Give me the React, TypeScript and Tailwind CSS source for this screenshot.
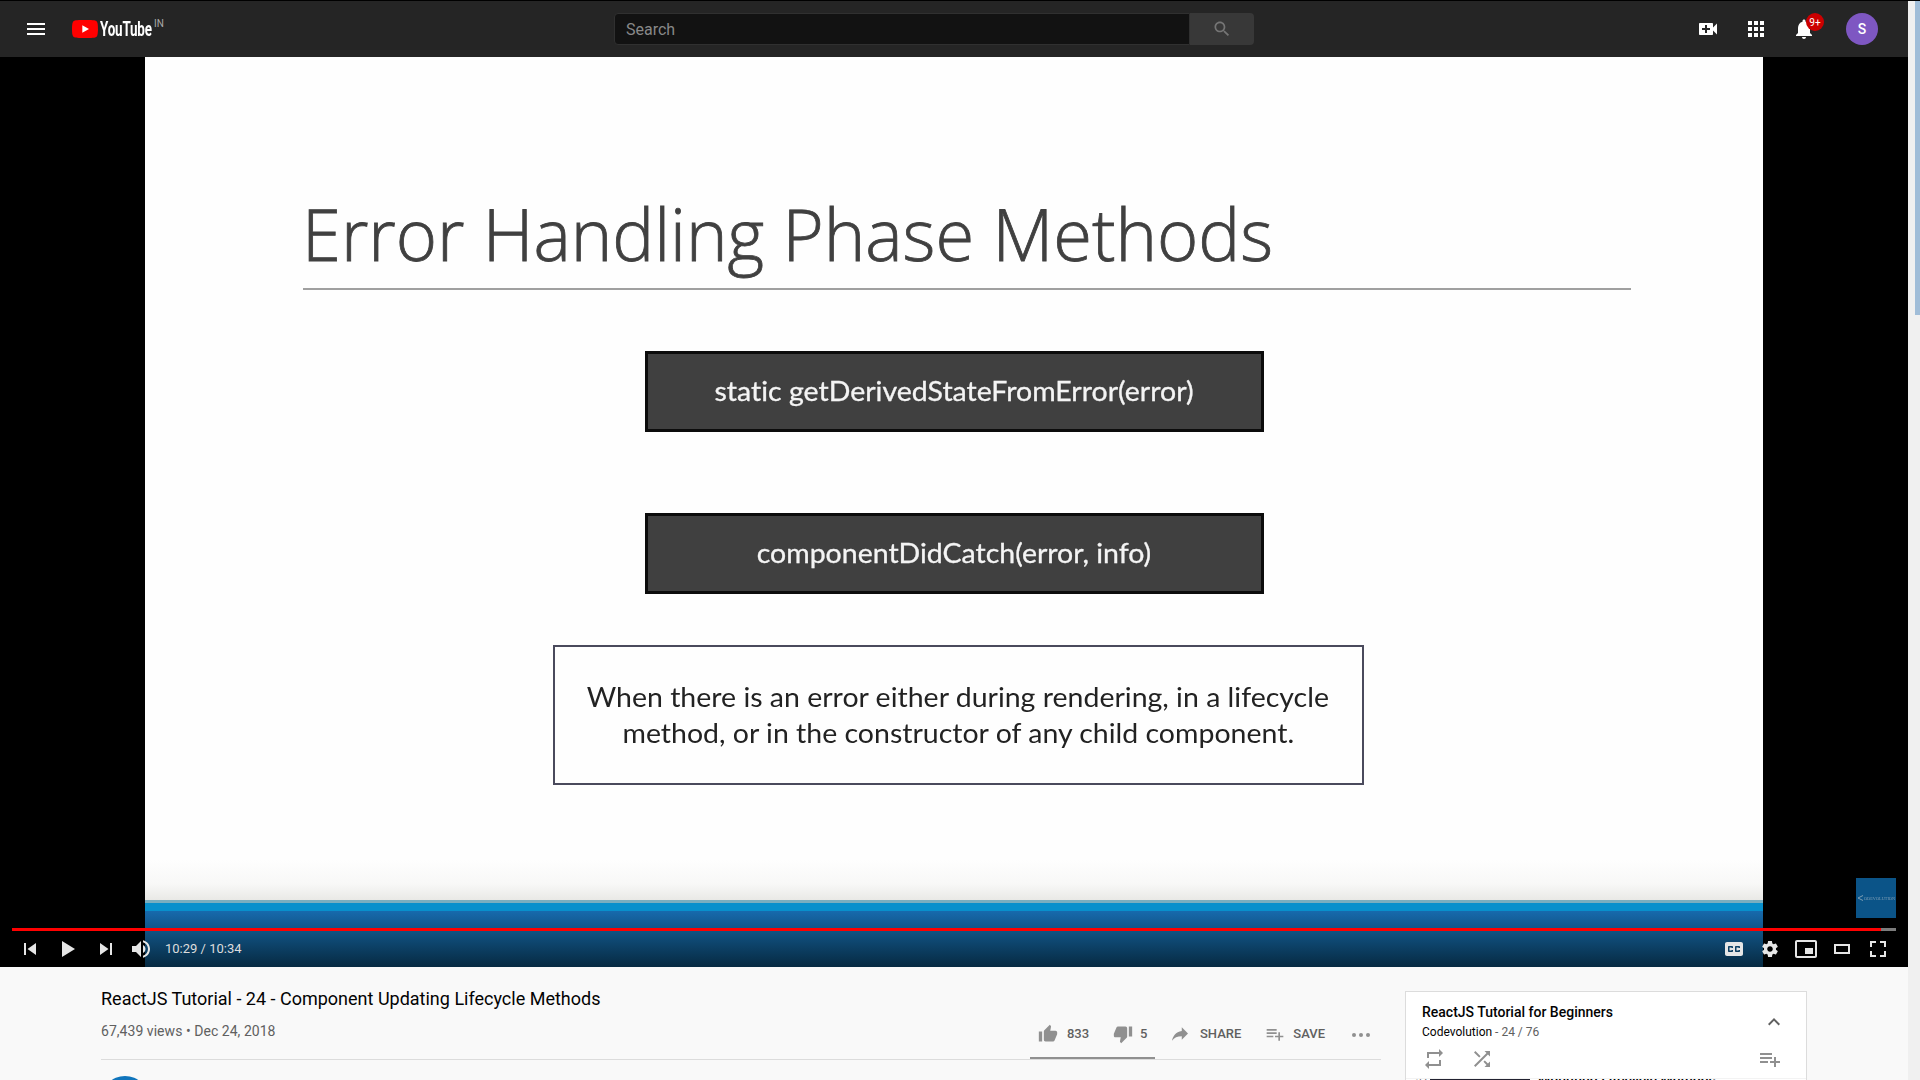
import type { ReactNode } from "react";

function Icon({ d, className, box = "0 0 24 24" }: { d: string; className: string; box?: string }) {
  return (
    <svg viewBox={box} className={className} fill="currentColor" fillRule="evenodd">
      <path d={d} />
    </svg>
  );
}

const playlistAdd = "M14 10H2v2h12v-2zm0-4H2v2h12V6zm4 8v-4h-2v4h-4v2h4v4h2v-4h4v-2h-4zM2 16h8v-2H2v2z";

const player = {
  prev: "M12,12h2v12h-2z M15.5,18l8.5,6V12z",
  play: "M12,26 25,18 12,10z",
  next: "M12,24 20.5,18 12,12V24z M22,12v12h2V12h-2z",
  volume:
    "M8,21 L12,21 L17,26 L17,10 L12,15 L8,15 L8,21 Z M19,14 L19,22 C20.48,21.32 21.5,19.77 21.5,18 C21.5,16.26 20.48,14.74 19,14 Z M19,11.29 C21.89,12.15 24,14.83 24,18 C24,21.17 21.89,23.85 19,24.71 L19,26.77 C23.01,25.86 26,22.28 26,18 C26,13.72 23.01,10.14 19,9.23 L19,11.29 Z",
  captions:
    "M11,11 C9.89,11 9,11.9 9,13 L9,23 C9,24.1 9.89,25 11,25 L25,25 C26.1,25 27,24.1 27,23 L27,13 C27,11.9 26.1,11 25,11 L11,11 Z M17,17 L15.5,17 L15.5,16.5 L13.5,16.5 L13.5,19.5 L15.5,19.5 L15.5,19 L17,19 L17,20 C17,20.55 16.55,21 16,21 L13,21 C12.45,21 12,20.55 12,20 L12,16 C12,15.45 12.45,15 13,15 L16,15 C16.55,15 17,15.45 17,16 L17,17 Z M24,17 L22.5,17 L22.5,16.5 L20.5,16.5 L20.5,19.5 L22.5,19.5 L22.5,19 L24,19 L24,20 C24,20.55 23.55,21 23,21 L20,21 C19.45,21 19,20.55 19,20 L19,16 C19,15.45 19.45,15 20,15 L23,15 C23.55,15 24,15.45 24,16 L24,17 Z",
  gear:
    "m 23.94,18.78 c .03,-0.25 .05,-0.51 .05,-0.78 0,-0.27 -0.02,-0.52 -0.05,-0.78 l 1.68,-1.32 c .15,-0.12 .19,-0.33 .09,-0.51 l -1.6,-2.76 c -0.09,-0.17 -0.31,-0.24 -0.48,-0.17 l -1.99,.8 c -0.41,-0.32 -0.86,-0.58 -1.35,-0.78 l -0.30,-2.12 c -0.02,-0.19 -0.19,-0.33 -0.39,-0.33 l -3.2,0 c -0.2,0 -0.36,.14 -0.39,.33 l -0.30,2.12 c -0.48,.2 -0.93,.47 -1.35,.78 l -1.99,-0.8 c -0.18,-0.07 -0.39,0 -0.48,.17 l -1.6,2.76 c -0.10,.17 -0.05,.39 .09,.51 l 1.68,1.32 c -0.03,.25 -0.05,.52 -0.05,.78 0,.26 .02,.52 .05,.78 l -1.68,1.32 c -0.15,.12 -0.19,.33 -0.09,.51 l 1.6,2.76 c .09,.17 .31,.24 .48,.17 l 1.99,-0.8 c .41,.32 .86,.58 1.35,.78 l .30,2.12 c .02,.19 .19,.33 .39,.33 l 3.2,0 c .2,0 .36,-0.14 .39,-0.33 l .30,-2.12 c .48,-0.2 .93,-0.47 1.35,-0.78 l 1.99,.8 c .18,.07 .39,0 .48,-0.17 l 1.6,-2.76 c .09,-0.17 .05,-0.39 -0.09,-0.51 l -1.68,-1.32 0,0 z m -5.94,2.01 c -1.54,0 -2.8,-1.25 -2.8,-2.8 0,-1.54 1.25,-2.8 2.8,-2.8 1.54,0 2.8,1.25 2.8,2.8 0,1.54 -1.25,2.8 -2.8,2.8 l 0,0 z",
  mini:
    "M25,17 L17,17 L17,23 L25,23 Z M29,25 L29,11 C29,9.88 28.1,9 27,9 L9,9 C7.9,9 7,9.88 7,11 L7,25 C7,26.1 7.9,27 9,27 L27,27 C28.1,27 29,26.1 29,25 Z M27,25 L9,25 L9,11 L27,11 Z",
  theater: "M10,13H26V23H10Z M12,15V21H24V15Z",
  full:
    "M10,16h2v-4h4v-2h-6z M20,10v2h4v4h2v-6z M24,24h-4v2h6v-6h-2z M12,20h-2v6h6v-2h-4z",
};

function Header() {
  return (
    <header className="flex h-[57px] items-center border-t border-black bg-[#252525] text-white">
      <Icon d="M3 18h18v-2H3v2zm0-5h18v-2H3v2zm0-7v2h18V6H3z" className="ml-6 size-6" />
      <div className="ml-6 flex h-6 w-[96px] items-center">
        <svg viewBox="0 0 26 18" className="h-[18px] w-[26px] shrink-0">
          <path
            fill="#ff0000"
            d="M25.4 2.8A3.2 3.2 0 0 0 23.1.5C21.1 0 13 0 13 0S4.900 0 2.900.5A3.200 3.200 0 0 0 .6 2.800C0 4.800 0 9 0 9s0 4.200.6 6.200a3.200 3.200 0 0 0 2.300 2.300C4.900 18 13 18 13 18s8.100 0 10.100-.5a3.200 3.200 0 0 0 2.300-2.300C26 13.200 26 9 26 9s0-4.200-.6-6.200z"
          />
          <path fill="#fff" d="M10.300 5.200v7.600L17 9z" />
        </svg>
        <div className="mt-[2px] ml-[2px] w-[53px] whitespace-nowrap">
          <span className="inline-block origin-left scale-x-[0.655] font-['Roboto'] text-[20.5px] leading-6 font-bold tracking-[-0.3px]">
            YouTube
          </span>
        </div>
        <span className="mb-[11px] ml-px font-['Roboto'] text-[10px] leading-3 text-[#aaa]">IN</span>
      </div>
      <div className="ml-[446px] flex h-8 w-[640px]">
        <div className="flex w-[576px] items-center rounded-l-sm border border-[#303030] bg-[#121212] pt-[2px] pl-[11px] text-base text-[#888]">
          Search
        </div>
        <div className="flex flex-1 items-center justify-center rounded-r-sm bg-[#383838] text-[#757575]">
          <Icon
            className="size-5"
            d="M15.5 14h-.79l-.28-.27C15.41 12.59 16 11.11 16 9.500 16 5.910 13.090 3 9.500 3S3 5.910 3 9.500 5.910 16 9.500 16c1.610 0 3.090-.59 4.230-1.570l.27.28v.79l5 4.990L20.490 19l-4.990-5zm-6 0C7.010 14 5 11.990 5 9.500S7.010 5 9.500 5 14 7.010 14 9.500 11.990 14 9.500 14z"
          />
        </div>
      </div>
      <div className="ml-auto mr-[30px] flex items-center gap-6">
        <Icon
          className="size-6"
          d="M17 10.500V7c0-.55-.45-1-1-1H4c-.55 0-1 .45-1 1v10c0 .55.45 1 1 1h12c.55 0 1-.45 1-1v-3.500l4 4v-11l-4 4zM14 13h-3v3H9v-3H6v-2h3V8h2v3h3v2z"
        />
        <Icon
          className="size-6"
          d="M4 8h4V4H4v4zm6 12h4v-4h-4v4zm-6 0h4v-4H4v4zm0-6h4v-4H4v4zm6 0h4v-4h-4v4zm6-10v4h4V4h-4zm-6 4h4V4h-4v4zm6 6h4v-4h-4v4zm0 6h4v-4h-4v4z"
        />
        <div className="relative">
          <Icon
            className="size-6"
            d="M12 22c1.100 0 2-.9 2-2h-4c0 1.100.9 2 2 2zm6-6v-5c0-3.070-1.640-5.640-4.500-6.320V4c0-.83-.67-1.500-1.500-1.500s-1.500.67-1.500 1.500v.68C7.630 5.360 6 7.920 6 11v5l-2 2v1h16v-1l-2-2z"
          />
          <span className="absolute top-[-4px] left-[14px] flex size-[18px] items-center justify-center rounded-full bg-[#cc0000] text-[10px]">
            9+
          </span>
        </div>
        <div className="ml-[6px] flex size-8 items-center justify-center rounded-full bg-[#7e57c2] text-sm font-medium">
          S
        </div>
      </div>
    </header>
  );
}

function CodeBox({ children, className }: { children: string; className: string }) {
  return (
    <div
      className={`flex h-[81px] w-[619px] items-center justify-center border-[3px] border-[#0c0c0c] bg-[#404040] font-['Lato'] text-[27px] text-[#f4f4f4] blur-[0.4px] [font-variant-ligatures:none] [-webkit-text-stroke:0.3px_#f4f4f4] ${className}`}
    >
      <span className="scale-x-[1.055]">{children}</span>
    </div>
  );
}

function Slide() {
  return (
    <div className="mx-[145px] flex h-full flex-col items-center bg-[#fefefe] pt-[128px]">
      <div className="ml-[26px] h-[105px] w-[1328px] border-b-2 border-[#a0a0a0] whitespace-nowrap blur-[0.4px]">
        <span className="-ml-px inline-block origin-left scale-x-[0.992] font-['Open_Sans'] text-[71px] leading-[97px] font-light text-[#404040] [-webkit-text-stroke:0.8px_#404040]">
          Error Handling Phase Methods
        </span>
      </div>
      <CodeBox className="mt-[61px]">static getDerivedStateFromError(error)</CodeBox>
      <CodeBox className="mt-[81px]">componentDidCatch(error, info)</CodeBox>
      <div className="mt-[51px] ml-[8px] flex h-[140px] w-[811px] flex-col items-center justify-center border-2 border-[#4a4a5c] font-['Lato'] text-[27px] leading-[36.5px] whitespace-nowrap text-[#222] blur-[0.4px] [font-variant-ligatures:none]">
        <span className="scale-x-[1.055]">When there is an error either during rendering, in a lifecycle</span>
        <span className="scale-x-[1.055]">method, or in the constructor of any child component.</span>
      </div>
      <div className="mt-auto h-[40px] w-full bg-linear-to-b from-[#fefefe] via-[#f8f8f7] via-60% to-[#e9e9e6]" />
      <div className="h-[3px] w-full bg-[#79aebf]" />
      <div className="h-[8px] w-full bg-[#0890cc]" />
      <div className="h-[56px] w-full bg-linear-to-b from-[#176aad] via-[#10507f] via-40% to-[#072a42]" />
    </div>
  );
}

function PlayerButton({ d, className = "" }: { d: string; className?: string }) {
  return (
    <div className={className}>
      <Icon d={d} box="0 0 36 36" className="size-9" />
    </div>
  );
}

function Player() {
  return (
    <section className="relative h-[910px] bg-black">
      <Slide />
      <div className="absolute top-[821px] right-3 flex size-10 items-center justify-center bg-[#0b5488] text-[#7f9fb4]">
        <svg viewBox="0 0 7 6" className="h-[6px] w-[7px] shrink-0" fill="none" stroke="currentColor">
          <path d="M6 .5 1 3l5 2.500" />
        </svg>
        <span className="w-[31px]">
          <span className="block origin-left scale-x-[0.86] font-['Liberation_Serif'] text-[5px] leading-none">ODEVOLUTION</span>
        </span>
      </div>
      <div className="absolute inset-x-3 bottom-0">
        <div className="h-[3px] bg-[#7c7c7c]">
          <div className="h-full w-[1869px] bg-[#ff0000]" />
        </div>
        <div className="flex h-9 items-center text-[#e6e6e6]">
          <PlayerButton d={player.prev} />
          <PlayerButton d={player.play} className="ml-[2px]" />
          <PlayerButton d={player.next} className="ml-[2px]" />
          <PlayerButton d={player.volume} />
          <span className="ml-[5px] text-[13px] text-[#ddd]">10:29 / 10:34</span>
          <div className="ml-auto flex">
            <PlayerButton d={player.captions} />
            <PlayerButton d={player.gear} />
            <PlayerButton d={player.mini} />
            <PlayerButton d={player.theater} />
            <PlayerButton d={player.full} />
          </div>
        </div>
      </div>
    </section>
  );
}

function Action({ children, label, className }: { children: ReactNode; label: string; className: string }) {
  return (
    <div className={`flex items-center ${className}`}>
      {children}
      <span>{label}</span>
    </div>
  );
}

function VideoInfo() {
  return (
    <div className="w-[1280px]">
      <h1 className="mt-5 text-lg leading-6 text-[#030303]">
        ReactJS Tutorial - 24 - Component Updating Lifecycle Methods
      </h1>
      <div className="flex h-[49px] border-b border-[#dcdcdc]">
        <p className="mt-[10px] text-sm leading-5 tracking-[0.04px] text-[#606060]">67,439 views • Dec 24, 2018</p>
        <div className="ml-auto flex text-[13px] font-medium text-[#606060]">
          <div className="-mb-px flex h-[48px] w-[125px] border-b-2 border-[#909090] pl-2">
            <Action label="833" className="mt-[13px] h-5 gap-[9px]">
              <Icon
                className="size-5 text-[#909090]"
                d="M1 21h4V9H1v12zm22-11c0-1.100-.9-2-2-2h-6.310l.95-4.570.03-.32c0-.41-.17-.79-.44-1.060L14.170 1 7.590 7.590C7.220 7.950 7 8.450 7 9v10c0 1.100.9 2 2 2h9c.83 0 1.540-.5 1.840-1.220l3.020-7.050c.09-.23.14-.47.14-.73v-2z"
              />
            </Action>
            <Action label="5" className="mt-[13px] ml-[24px] h-5 gap-[7px]">
              <Icon
                className="size-5 text-[#909090]"
                d="M15 3H6c-.83 0-1.540.5-1.840 1.220l-3.020 7.050c-.09.23-.14.47-.14.73v2c0 1.100.9 2 2 2h6.310l-.95 4.570-.03.32c0 .41.17.79.44 1.060L9.830 23l6.590-6.590c.36-.36.58-.86.58-1.410V5c0-1.100-.9-2-2-2zm4 0v12h4V3h-4z"
              />
            </Action>
          </div>
          <Action label="SHARE" className="mt-[13px] ml-[17px] h-5 gap-2">
            <Icon
              className="size-5 text-[#909090]"
              d="M11.730 8.270V4l7.470 7.470-7.470 7.460v-4.370C6.400 14.560 2.670 16.270 0 20c1.070-5.330 4.270-10.670 11.730-11.730z"
            />
          </Action>
          <Action label="SAVE" className="mt-[13px] ml-[24px] h-5 gap-2">
            <Icon className="size-5 text-[#909090]" d={playlistAdd} />
          </Action>
          <svg viewBox="0 0 20 20" className="mt-[14px] mr-[10px] ml-[26px] size-5" fill="#909090">
            <circle cx="3" cy="10" r="2" />
            <circle cx="10" cy="10" r="2" />
            <circle cx="17" cy="10" r="2" />
          </svg>
        </div>
      </div>
      <div className="mt-4 size-12 rounded-full bg-[#1075bc]" />
    </div>
  );
}

function Playlist() {
  return (
    <aside className="mt-[24px] ml-6 h-[200px] w-[402px] border border-[#dcdcdc] bg-white text-[#030303]">
      <div className="flex h-[53px] justify-between pr-5 pl-4">
        <div className="pt-[10px]">
          <h2 className="text-sm leading-5 font-medium">ReactJS Tutorial for Beginners</h2>
          <p className="mt-[3px] text-xs leading-[14px]">
            Codevolution <span className="text-[#606060]">- 24 / 76</span>
          </p>
        </div>
        <Icon
          className="mt-[18px] size-6 text-[#606060]"
          d="M7.410 15.410 12 10.830l4.590 4.580L18 14l-6-6-6 6z"
        />
      </div>
      <div className="flex h-[34px] items-center border-b border-[#f3f3f3] pr-6 pb-[5px] pl-4 text-[#909090]">
        <Icon className="size-6" d="M7 7h10v3l4-4-4-4v3H5v6h2V7zm10 10H7v-3l-4 4 4 4v-3h12v-6h-2v4z" />
        <Icon
          className="ml-6 size-6"
          d="M10.590 9.170 5.410 4 4 5.410l5.170 5.170 1.420-1.410zM14.500 4l2.040 2.040L4 18.590 5.410 20 17.960 7.460 20 9.500V4h-5.500zm.33 9.410-1.410 1.410 3.130 3.130L14.500 20H20v-5.500l-2.040 2.040-3.130-3.130z"
        />
        <Icon className="ml-auto size-6" d={playlistAdd} />
      </div>
      <div className="flex overflow-hidden">
        <span className="-mt-[3px] ml-[10px] w-[14px] text-[10px] leading-3 text-[#606060]">23</span>
        <div className="h-14 w-[100px] bg-[#222230]" />
        <span className="-mt-[9px] ml-2 text-sm font-medium">Mounting Lifecycle Methods</span>
      </div>
    </aside>
  );
}

export default function App() {
  return (
    <div className="flex h-[1080px] w-[1920px] overflow-hidden bg-[#f9f9f9] font-['Roboto',sans-serif]">
      <div className="w-[1908px] shrink-0">
        <Header />
        <Player />
        <main className="flex pl-[101px]">
          <VideoInfo />
          <Playlist />
        </main>
      </div>
      <div className="flex w-3 justify-end border-t border-black bg-[#f0f0f0]">
        <div className="h-[314px] w-[5px] bg-[#a0bdd8]" />
      </div>
    </div>
  );
}
